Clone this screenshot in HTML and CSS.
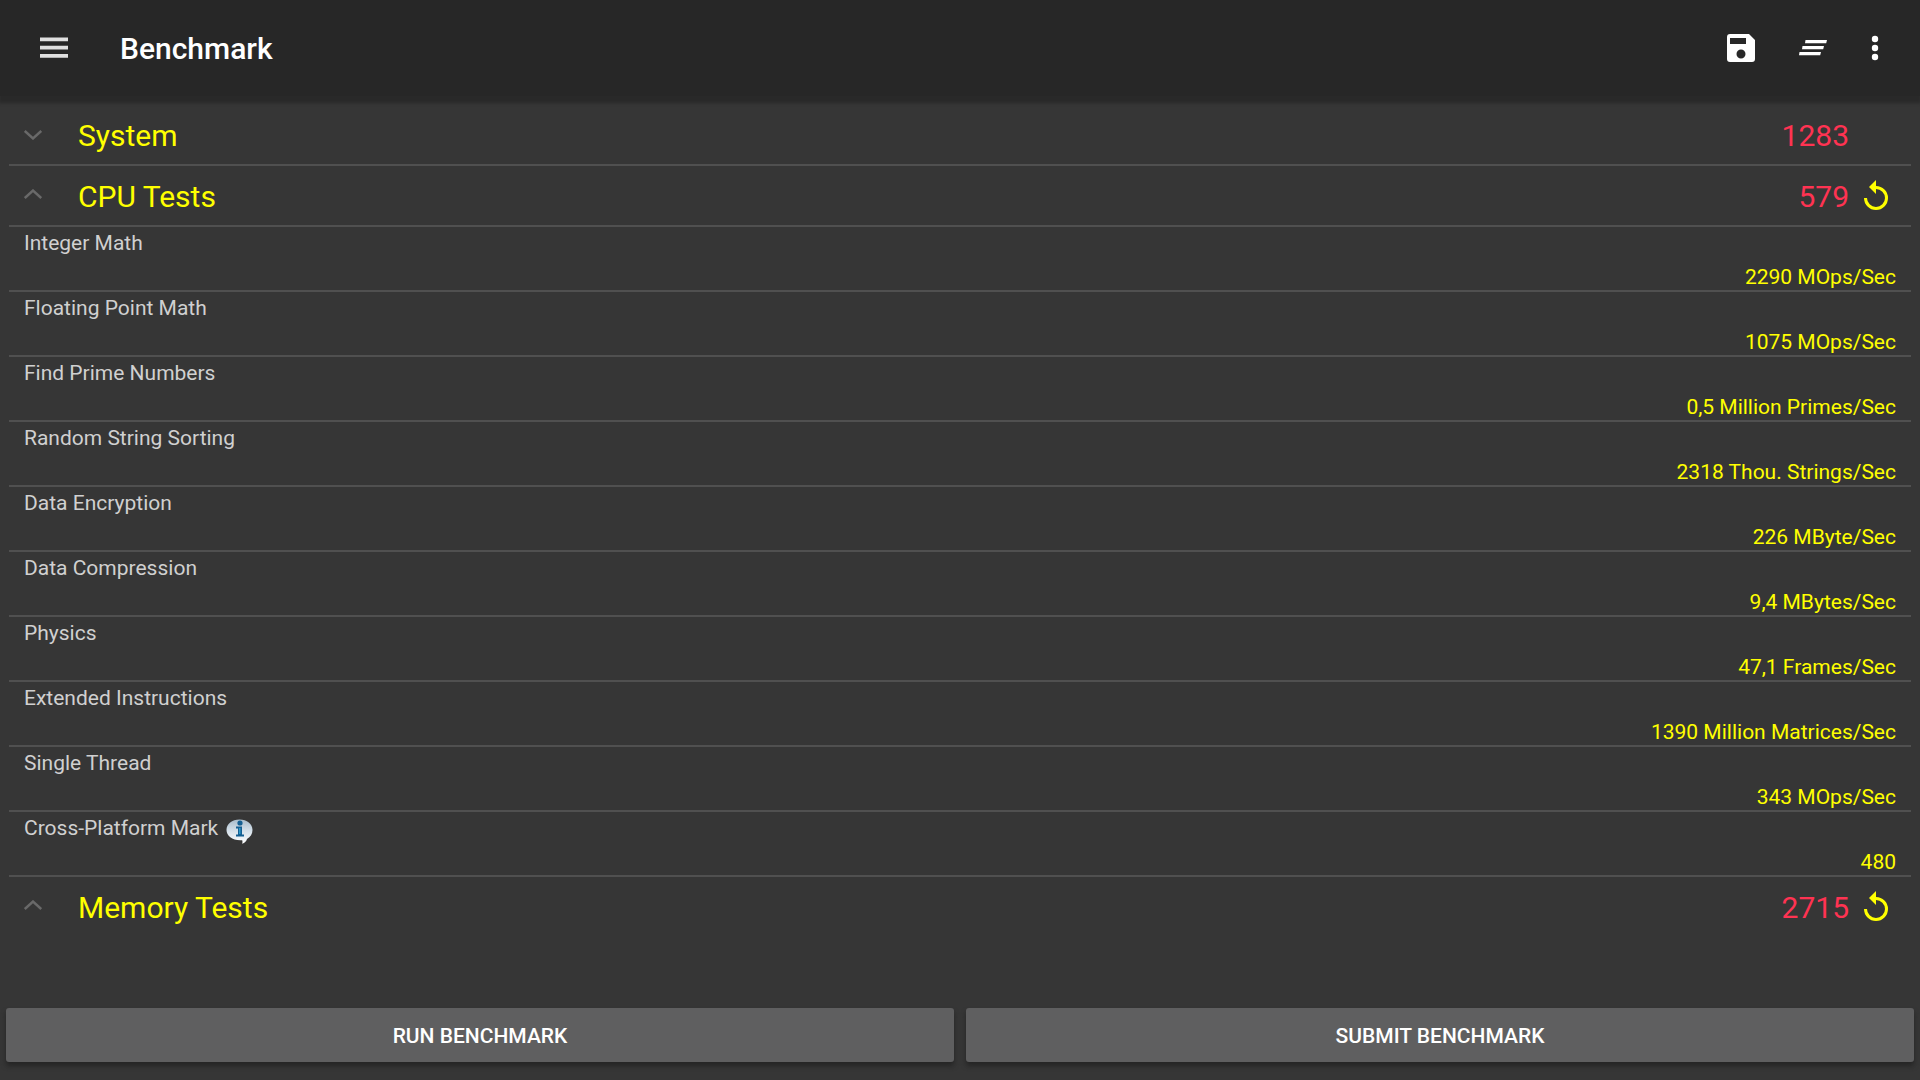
FILE: index.html
```html
<!DOCTYPE html>
<html lang="en">
<head>
<meta charset="utf-8">
<meta name="viewport" content="width=device-width, initial-scale=1">
<title>Benchmark</title>
<link rel="stylesheet" href="styles.css">
</head>
<body>
<header class="app-bar">
  <button class="icon-button" type="button" aria-label="Menu">
    <svg width="28" height="22" viewBox="0 0 28 22"><path d="M0 .5h28v3.800H0zM0 8.700h28v3.800H0zM0 17h28v3.800H0z" fill="#e0e0e0"/></svg>
  </button>
  <h1 class="title">Benchmark</h1>
  <div class="actions">
    <button class="icon-button" type="button" aria-label="Save">
      <svg width="28" height="28" viewBox="0 0 28 28"><path fill="#fff" fill-rule="evenodd" d="M3 0h19l6 6v19a3 3 0 0 1-3 3H3a3 3 0 0 1-3-3V3a3 3 0 0 1 3-3zM3 4v6h16V4zM14 15.500a4.500 4.500 0 1 0 0 9a4.500 4.500 0 1 0 0-9z"/></svg>
    </button>
    <button class="icon-button" type="button" aria-label="Clear all">
      <svg width="28" height="28" viewBox="0 0 28 28"><path fill="#fff" d="M6.500 6H28l-.8 3.300H6zM3.500 12H25l-.8 3.300H3zM.5 18H22l-.8 3.300H0z"/></svg>
    </button>
    <button class="icon-button" type="button" aria-label="More options">
      <svg width="8" height="28" viewBox="0 0 8 28"><g fill="#fff"><circle cx="4" cy="5" r="3.200"/><circle cx="4" cy="14" r="3.200"/><circle cx="4" cy="23" r="3.200"/></g></svg>
    </button>
  </div>
</header>

<main class="results">
  <section>
    <div class="group">
      <button class="toggle" type="button" aria-expanded="false">
        <svg class="chevron" width="18" height="10" viewBox="0 0 18 10"><path d="M.8 1L9 8.500 17.200 1"/></svg>
        <span class="name">System</span>
      </button>
      <span class="score">1283</span>
      <span class="rerun"></span>
    </div>
  </section>

  <section>
    <div class="group">
      <button class="toggle" type="button" aria-expanded="true">
        <svg class="chevron up" width="18" height="10" viewBox="0 0 18 10"><path d="M.8 9L9 1.500 17.200 9"/></svg>
        <span class="name">CPU Tests</span>
      </button>
      <span class="score">579</span>
      <button class="rerun" type="button" aria-label="Run CPU tests again">
        <svg width="24" height="30" viewBox="0 0 24 30"><path d="M1.500 18A10.500 10.500 0 1 0 12 7.500" fill="none" stroke="#ff0" stroke-width="3"/><path d="M12 0v14L5 7z" fill="#ff0"/></svg>
      </button>
    </div>
    <dl class="tests">
      <div class="test"><dt>Integer Math</dt><dd>2290 MOps/Sec</dd></div>
      <div class="test"><dt>Floating Point Math</dt><dd>1075 MOps/Sec</dd></div>
      <div class="test"><dt>Find Prime Numbers</dt><dd>0,5 Million Primes/Sec</dd></div>
      <div class="test"><dt>Random String Sorting</dt><dd>2318 Thou. Strings/Sec</dd></div>
      <div class="test"><dt>Data Encryption</dt><dd>226 MByte/Sec</dd></div>
      <div class="test"><dt>Data Compression</dt><dd>9,4 MBytes/Sec</dd></div>
      <div class="test"><dt>Physics</dt><dd>47,1 Frames/Sec</dd></div>
      <div class="test"><dt>Extended Instructions</dt><dd>1390 Million Matrices/Sec</dd></div>
      <div class="test"><dt>Single Thread</dt><dd>343 MOps/Sec</dd></div>
      <div class="test">
        <dt>Cross-Platform Mark
          <button class="info" type="button" aria-label="About Cross-Platform Mark">
            <svg width="27" height="25" viewBox="0 0 27 25">
              <defs><linearGradient id="bubble" x1="0" y1="0" x2="0" y2="1"><stop offset="0" stop-color="#a9bccb"/><stop offset=".45" stop-color="#d3dfe9"/><stop offset="1" stop-color="#fff"/></linearGradient></defs>
              <path fill="url(#bubble)" d="M13.500 0.500C21 .5 26.500 5 26.500 11c0 4-2 7-5.500 9-.5 2-2 4-5 4.800.6-1.200.6-2.300.2-3.600C7 22 .5 17 .5 11 .5 5 6 .5 13.500.5z"/>
              <circle cx="14" cy="4" r="2.600" fill="#155f92"/>
              <path d="M10 7.500h6v8h2v2H10v-2h2v-6h-2z" fill="#155f92"/>
              <path d="M13 9h1.500v6H13z" fill="#2d9bcb"/>
            </svg>
          </button>
        </dt>
        <dd>480</dd>
      </div>
    </dl>
  </section>

  <section>
    <div class="group last">
      <button class="toggle" type="button" aria-expanded="true">
        <svg class="chevron up" width="18" height="10" viewBox="0 0 18 10"><path d="M.8 9L9 1.500 17.200 9"/></svg>
        <span class="name">Memory Tests</span>
      </button>
      <span class="score">2715</span>
      <button class="rerun" type="button" aria-label="Run memory tests again">
        <svg width="24" height="30" viewBox="0 0 24 30"><path d="M1.500 18A10.500 10.500 0 1 0 12 7.500" fill="none" stroke="#ff0" stroke-width="3"/><path d="M12 0v14L5 7z" fill="#ff0"/></svg>
      </button>
    </div>
  </section>
</main>

<footer class="footer">
  <button class="command" type="button">RUN BENCHMARK</button>
  <button class="command" type="button">SUBMIT BENCHMARK</button>
</footer>
</body>
</html>
```
FILE: styles.css
```css
* {
  box-sizing: border-box;
}

body {
  display: flex;
  flex-direction: column;
  min-height: 100vh;
  margin: 0;
  background: #363636;
  color: #d0d0d0;
  font-family: Roboto, "Liberation Sans", sans-serif;
  font-size: 21px;
  line-height: 24px;
}

button {
  padding: 0;
  border: 0;
  background: none;
  color: inherit;
  font: inherit;
  cursor: pointer;
}

svg {
  display: block;
}

.app-bar {
  display: flex;
  align-items: center;
  height: 96px;
  padding: 0 41px 0 40px;
  background: #272727;
  box-shadow: 0 6px 3px 1px #292929;
}

.title {
  margin: 0 0 0 52px;
  padding-top: 2px;
  color: #fff;
  font-size: 30px;
  font-weight: 500;
  line-height: 36px;
}

.actions {
  display: flex;
  align-items: center;
  gap: 44px;
  margin-left: auto;
}

.results {
  flex: 1;
  padding: 9px 9px 0;
}

.group {
  display: flex;
  align-items: center;
  height: 61px;
  padding-right: 23px;
  border-bottom: 2px solid #505050;
}

.group.last {
  border-bottom-color: transparent;
}

.toggle {
  display: flex;
  flex: 1;
  align-items: center;
  gap: 36px;
  padding-left: 15px;
  text-align: left;
}

.chevron {
  fill: none;
  stroke: #696969;
  stroke-width: 2.4;
}

.chevron.up {
  margin-bottom: 4px;
}

.name,
.score {
  padding-top: 2px;
  font-size: 30px;
  line-height: 36px;
}

.name {
  color: #ff0;
}

.score {
  color: #ff3352;
}

.rerun {
  width: 24px;
  margin-left: 15px;
}

.rerun svg {
  margin-bottom: 2px;
}

.tests {
  margin: 0;
}

.test {
  display: flex;
  flex-direction: column;
  justify-content: space-between;
  height: 65px;
  padding: 4px 15px 1px;
  border-bottom: 2px solid #505050;
}

.test dt {
  display: flex;
  gap: 8px;
  height: 24px;
}

.test dd {
  margin: 0;
  color: #ff0;
  text-align: right;
}

.info {
  padding-top: 3px;
}

.footer {
  display: grid;
  grid-template-columns: 1fr 1fr;
  gap: 12px;
  padding: 0 6px 18px;
}

.command {
  height: 54px;
  padding-top: 2px;
  border-radius: 3px;
  background: #5f5f60;
  box-shadow: 0 4px 5px #252525;
  color: #fff;
  font-weight: 500;
}
```
